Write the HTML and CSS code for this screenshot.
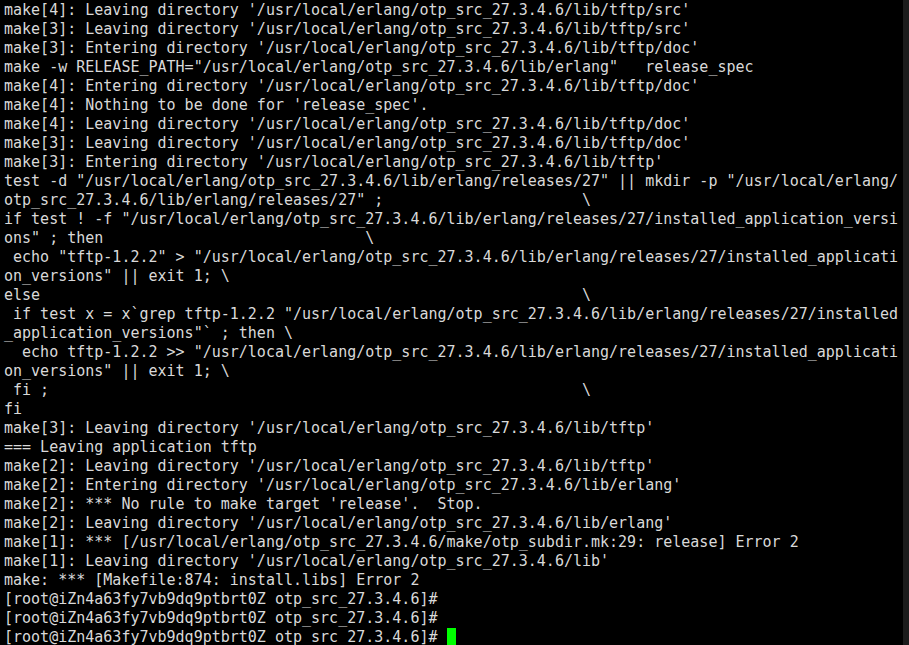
FILE: index.html
```html
<!DOCTYPE html>
<html>
<head>
<meta charset="utf-8">
<link rel="stylesheet" href="styles.css">
</head>
<body>
<div class="window">
<pre class="term">make[4]: Leaving directory '/usr/local/erlang/otp_src_27.3.4.6/lib/tftp/src'
make[3]: Leaving directory '/usr/local/erlang/otp_src_27.3.4.6/lib/tftp/src'
make[3]: Entering directory '/usr/local/erlang/otp_src_27.3.4.6/lib/tftp/doc'
make -w RELEASE_PATH="/usr/local/erlang/otp_src_27.3.4.6/lib/erlang"   release_spec
make[4]: Entering directory '/usr/local/erlang/otp_src_27.3.4.6/lib/tftp/doc'
make[4]: Nothing to be done for 'release_spec'.
make[4]: Leaving directory '/usr/local/erlang/otp_src_27.3.4.6/lib/tftp/doc'
make[3]: Leaving directory '/usr/local/erlang/otp_src_27.3.4.6/lib/tftp/doc'
make[3]: Entering directory '/usr/local/erlang/otp_src_27.3.4.6/lib/tftp'
test -d "/usr/local/erlang/otp_src_27.3.4.6/lib/erlang/releases/27" || mkdir -p "/usr/local/erlang/
otp_src_27.3.4.6/lib/erlang/releases/27" ;                      \
if test ! -f "/usr/local/erlang/otp_src_27.3.4.6/lib/erlang/releases/27/installed_application_versi
ons" ; then                             \
 echo "tftp-1.2.2" > "/usr/local/erlang/otp_src_27.3.4.6/lib/erlang/releases/27/installed_applicati
on_versions" || exit 1; \
else                                                            \
 if test x = x`grep tftp-1.2.2 "/usr/local/erlang/otp_src_27.3.4.6/lib/erlang/releases/27/installed
_application_versions"` ; then \
  echo tftp-1.2.2 >> "/usr/local/erlang/otp_src_27.3.4.6/lib/erlang/releases/27/installed_applicati
on_versions" || exit 1; \
 fi ;                                                           \
fi
make[3]: Leaving directory '/usr/local/erlang/otp_src_27.3.4.6/lib/tftp'
=== Leaving application tftp
make[2]: Leaving directory '/usr/local/erlang/otp_src_27.3.4.6/lib/tftp'
make[2]: Entering directory '/usr/local/erlang/otp_src_27.3.4.6/lib/erlang'
make[2]: *** No rule to make target 'release'.  Stop.
make[2]: Leaving directory '/usr/local/erlang/otp_src_27.3.4.6/lib/erlang'
make[1]: *** [/usr/local/erlang/otp_src_27.3.4.6/make/otp_subdir.mk:29: release] Error 2
make[1]: Leaving directory '/usr/local/erlang/otp_src_27.3.4.6/lib'
make: *** [Makefile:874: install.libs] Error 2
[root@iZn4a63fy7vb9dq9ptbrt0Z otp_src_27.3.4.6]#
[root@iZn4a63fy7vb9dq9ptbrt0Z otp_src_27.3.4.6]#
[root@iZn4a63fy7vb9dq9ptbrt0Z otp_src_27.3.4.6]# <span class="cursor"> </span></pre>
<div class="scrollbar"></div>
</div>
</body>
</html>
```
FILE: styles.css
```css
html, body {
  margin: 0;
  padding: 0;
  background: #000;
  height: 100%;
  overflow: hidden;
}
.window {
  display: flex;
  height: 645px;
  width: 909px;
  background: #000;
}
.term {
  flex: 1;
  margin: 0;
  padding: 1px 0 0 4px;
  font-family: "DejaVu Sans Mono", monospace;
  font-size: 15px;
  line-height: 19px;
  color: #d9d9d9;
  white-space: pre;
  overflow: hidden;
}
.cursor {
  display: inline-block;
  width: 9px;
  height: 19px;
  vertical-align: top;
  background: #00ff00;
}
.scrollbar {
  width: 6px;
  background: #1c1c1c;
}
```
